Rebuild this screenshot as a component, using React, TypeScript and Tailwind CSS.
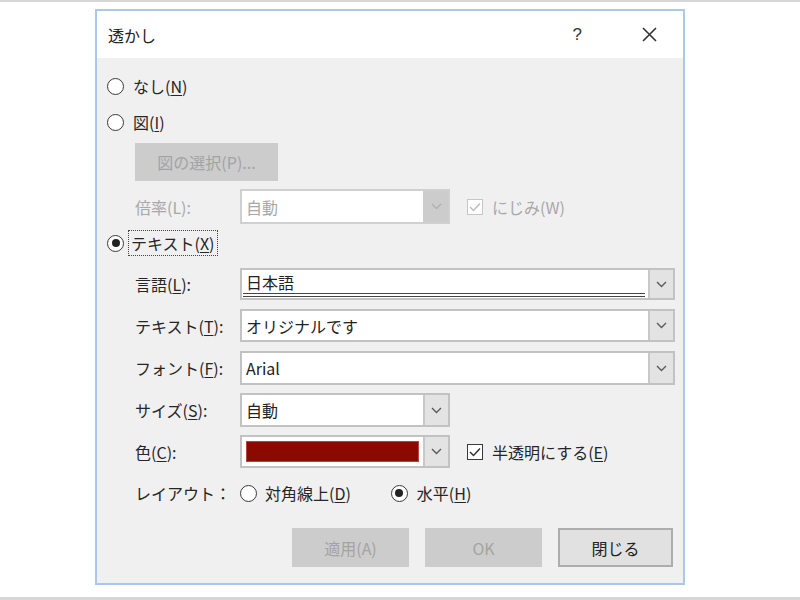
import React from "react";

const font = {
  fontFamily: '"Noto Sans CJK JP", "Noto Sans", sans-serif',
};

function U({ c }: { c: string }) {
  return <span className="underline underline-offset-[2px]">{c}</span>;
}

function Chevron({ color = "#5a5a5a" }: { color?: string }) {
  return (
    <svg width="11" height="7" viewBox="0 0 11 7">
      <path d="M1 1 L5.5 5.5 L10 1" fill="none" stroke={color} strokeWidth="1.4" />
    </svg>
  );
}

function Radio({ checked, disabled }: { checked?: boolean; disabled?: boolean }) {
  return (
    <div
      className={`w-[17px] h-[17px] rounded-full border-[1.5px] bg-white flex items-center justify-center shrink-0 ${
        disabled ? "border-[#bcbcbc]" : "border-[#3a3a3a]"
      }`}
    >
      {checked && <div className="w-[8px] h-[8px] rounded-full bg-[#222]" />}
    </div>
  );
}

function Check({ disabled }: { disabled?: boolean }) {
  return (
    <div
      className={`w-[16px] h-[16px] border-[1.5px] bg-white flex items-center justify-center shrink-0 ${
        disabled ? "border-[#c6c6c6]" : "border-[#3a3a3a]"
      }`}
    >
      <svg width="12" height="10" viewBox="0 0 12 10">
        <path
          d="M1 5 L4.5 8.5 L11 1.5"
          fill="none"
          stroke={disabled ? "#bdbdbd" : "#333"}
          strokeWidth="1.5"
        />
      </svg>
    </div>
  );
}

function Combo({
  w,
  h,
  disabled,
  children,
}: {
  w: string;
  h: string;
  disabled?: boolean;
  children?: React.ReactNode;
}) {
  return (
    <div
      className={`${w} ${h} flex border-2 bg-white ${
        disabled ? "border-[#d0d0d0]" : "border-[#c2c2c2]"
      }`}
    >
      <div className="flex-1 relative flex items-center px-[4px] min-w-0">{children}</div>
      <div
        className={`w-[25px] flex items-center justify-center border-l-2 ${
          disabled ? "bg-[#cccccc] border-[#cccccc]" : "bg-[#e3e3e3] border-[#c8c8c8]"
        }`}
      >
        <Chevron color={disabled ? "#b0b0b0" : "#5a5a5a"} />
      </div>
    </div>
  );
}

function Label({ children, disabled }: { children: React.ReactNode; disabled?: boolean }) {
  return (
    <div className={`w-[105px] shrink-0 ${disabled ? "text-[#a8a8a8]" : "text-[#262626]"}`}>
      {children}
    </div>
  );
}

export default function App() {
  return (
    <div
      className="w-[800px] h-[600px] bg-white border-t-2 border-b-[3px] border-[#d6d6d6]"
      style={font}
    >
      <div className="ml-[95px] mt-[7px] w-[590px] h-[576px] border-2 border-[#a9c8ea] flex flex-col text-[16px] leading-none">
        {/* Title bar */}
        <div className="h-[47px] bg-white flex items-center pl-[11px] pr-[26px] shrink-0">
          <div className="text-[16px] text-[#222]">透かし</div>
          <div className="flex-1" />
          <div
            className="text-[17px] text-[#333] mr-[60px]"
            style={{ fontFamily: '"Liberation Sans", sans-serif' }}
          >
            ?
          </div>
          <svg width="15" height="15" viewBox="0 0 15 15">
            <path d="M1 1 L14 14 M14 1 L1 14" stroke="#333" strokeWidth="1.6" />
          </svg>
        </div>

        {/* Body */}
        <div className="flex-1 bg-[#f0f0f0] flex flex-col pl-[10px]">
          <div className="mt-[16px] h-[24px] flex items-center gap-[9px]">
            <Radio />
            <span className="text-[#262626]">
              なし(<U c="N" />)
            </span>
          </div>
          <div className="mt-[12px] h-[24px] flex items-center gap-[9px]">
            <Radio />
            <span className="text-[#262626]">
              図(<U c="I" />)
            </span>
          </div>
          <div className="mt-[9px] ml-[28px] w-[143px] h-[38px] bg-[#cccccc] flex items-center justify-center text-[#a3a3a3]">
            図の選択(P)...
          </div>
          <div className="mt-[8px] ml-[28px] h-[35px] flex items-center">
            <Label disabled>倍率(L):</Label>
            <Combo w="w-[210px]" h="h-[35px]" disabled>
              <span className="text-[#a8a8a8]">自動</span>
            </Combo>
            <div className="ml-[17px] flex items-center gap-[9px]">
              <Check disabled />
              <span className="text-[#a8a8a8]">にじみ(W)</span>
            </div>
          </div>
          <div className="mt-[6px] h-[26px] flex items-center">
            <Radio checked />
            <div className="ml-[4px] h-[26px] px-[2px] flex items-center border border-dotted border-[#444] text-[#262626]">
              テキスト(<U c="X" />)
            </div>
          </div>
          <div className="mt-[12px] ml-[28px] h-[32px] flex items-center">
            <Label>
              言語(<U c="L" />):
            </Label>
            <Combo w="w-[435px]" h="h-[32px]">
              <span className="text-[#222] -mt-[4px]">日本語</span>
              <div className="absolute left-[1px] right-[3px] bottom-[1px] h-[4px] border-t border-b border-[#444]" />
            </Combo>
          </div>
          <div className="mt-[9px] ml-[28px] h-[33px] flex items-center">
            <Label>
              テキスト(<U c="T" />):
            </Label>
            <Combo w="w-[435px]" h="h-[33px]">
              <span className="text-[#222]">オリジナルです</span>
            </Combo>
          </div>
          <div className="mt-[9px] ml-[28px] h-[34px] flex items-center">
            <Label>
              フォント(<U c="F" />):
            </Label>
            <Combo w="w-[435px]" h="h-[34px]">
              <span className="text-[#222]">Arial</span>
            </Combo>
          </div>
          <div className="mt-[8px] ml-[28px] h-[34px] flex items-center">
            <Label>
              サイズ(<U c="S" />):
            </Label>
            <Combo w="w-[210px]" h="h-[34px]">
              <span className="text-[#222]">自動</span>
            </Combo>
          </div>
          <div className="mt-[8px] ml-[28px] h-[33px] flex items-center">
            <Label>
              色(<U c="C" />):
            </Label>
            <Combo w="w-[210px]" h="h-[33px]">
              <div className="w-full h-[21px] bg-[#8b0a00] border border-[#b04a40]" />
            </Combo>
            <div className="ml-[17px] flex items-center gap-[9px]">
              <Check />
              <span className="text-[#262626]">
                半透明にする(<U c="E" />)
              </span>
            </div>
          </div>
          <div className="mt-[13px] ml-[28px] h-[24px] flex items-center">
            <Label>レイアウト：</Label>
            <div className="flex items-center gap-[8px]">
              <Radio />
              <span className="text-[#262626]">
                対角線上(<U c="D" />)
              </span>
            </div>
            <div className="ml-[40px] flex items-center gap-[9px]">
              <Radio checked />
              <span className="text-[#262626]">
                水平(<U c="H" />)
              </span>
            </div>
          </div>
          <div className="mt-[23px] pr-[10px] flex justify-end gap-[16px]">
            <div className="w-[117px] h-[39px] bg-[#cccccc] flex items-center justify-center text-[#a3a3a3]">
              適用(A)
            </div>
            <div className="w-[117px] h-[39px] bg-[#cccccc] flex items-center justify-center text-[#a3a3a3]">
              OK
            </div>
            <div className="w-[115px] h-[39px] bg-[#e1e1e1] border-2 border-[#adadad] flex items-center justify-center text-[#222]">
              閉じる
            </div>
          </div>
        </div>
      </div>
    </div>
  );
}
